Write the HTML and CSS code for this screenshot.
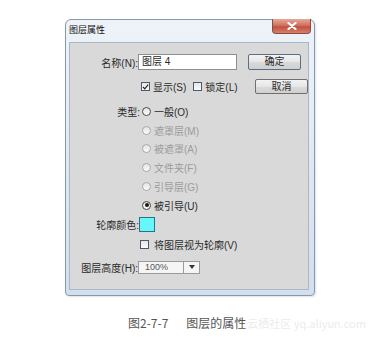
FILE: index.html
```html
<!DOCTYPE html>
<html lang="zh">
<head>
<meta charset="utf-8">
<title>图层属性</title>
<link rel="stylesheet" href="styles.css">
</head>
<body>
<div class="dialog">
  <div class="titlebar">
    <span class="title">图层属性</span>
    <span class="close"><svg width="10" height="8" viewBox="0 0 10 8"><path d="M1.5 1 L8.5 7 M8.5 1 L1.5 7" stroke="#fff" stroke-width="2.2" stroke-linecap="round"/></svg></span>
  </div>
  <div class="panel">
    <div class="row r-name">
      <span class="label">名称(N):</span>
      <span class="input">图层 4</span>
      <span class="btn default">确定</span>
    </div>
    <div class="row r-show">
      <span class="checks">
        <span class="check on"><svg width="8" height="8" viewBox="0 0 8 8"><path d="M1.2 4 L3.2 6.2 L7 1.3" fill="none" stroke="#222" stroke-width="1.3"/></svg></span>
        <span class="ctext">显示(S)</span>
        <span class="check lock"></span>
        <span class="ctext">锁定(L)</span>
      </span>
      <span class="btn">取消</span>
    </div>
    <div class="types">
      <div class="row r-radio"><span class="label tl">类型:</span><span class="radio"></span><span class="rtext">一般(O)</span></div>
      <div class="row r-radio off"><span class="label tl"></span><span class="radio"></span><span class="rtext">遮罩层(M)</span></div>
      <div class="row r-radio off"><span class="label tl"></span><span class="radio"></span><span class="rtext">被遮罩(A)</span></div>
      <div class="row r-radio off"><span class="label tl"></span><span class="radio"></span><span class="rtext">文件夹(F)</span></div>
      <div class="row r-radio off"><span class="label tl"></span><span class="radio"></span><span class="rtext">引导层(G)</span></div>
      <div class="row r-radio"><span class="label tl"></span><span class="radio sel"></span><span class="rtext">被引导(U)</span></div>
    </div>
    <div class="row r-color">
      <span class="label cl">轮廓颜色:</span>
      <span class="swatch"></span>
    </div>
    <div class="row r-outline">
      <span class="check"></span>
      <span class="ctext">将图层视为轮廓(V)</span>
    </div>
    <div class="row r-height">
      <span class="label">图层高度(H):</span>
      <span class="select"><span class="sval">100%</span><span class="sarrow"><svg width="6" height="4" viewBox="0 0 6 4"><path d="M0 0 H6 L3 4 Z" fill="#333"/></svg></span></span>
    </div>
  </div>
</div>
<p class="caption"><span>图2-7-7</span><span class="ctitle">图层的属性</span><span class="wm">云栖社区 yq.aliyun.com</span></p>
</body>
</html>
```
FILE: styles.css
```css
html, body {
  margin: 0;
  padding: 0;
  background: #ffffff;
}
body {
  font-family: "Liberation Sans", "Noto Sans CJK SC", sans-serif;
  color: #2a2a2a;
}
.dialog {
  margin: 19px 0 0 65px;
  width: 250px;
  height: 277px;
  box-sizing: border-box;
  border: 1px solid #8598b0;
  border-radius: 6px 6px 4px 4px;
  background: linear-gradient(#eef3f9, #d2dfec);
  padding: 0 5px 5px 3px;
  display: flex;
  flex-direction: column;
  box-shadow: 1px 1px 2px rgba(0,0,0,0.12);
}
.titlebar {
  height: 22px;
  flex: none;
  display: flex;
  justify-content: space-between;
  align-items: flex-start;
}
.title {
  font-family: "Noto Sans CJK SC", sans-serif;
  font-size: 9px;
  line-height: 20px;
  color: #111;
}
.close {
  width: 39px;
  height: 15px;
  margin: -1px -2px 0 0;
  box-sizing: border-box;
  border: 1px solid #8f4a40;
  border-top: none;
  border-radius: 0 0 4px 4px;
  background: linear-gradient(#e8a898, #cf6a58 50%, #c0503e 55%, #d4806c);
  display: flex;
  align-items: center;
  justify-content: center;
}
.panel {
  flex: 1;
  box-sizing: border-box;
  background: #d9d9d9;
  border: 1px solid #a9b7c8;
  padding-top: 11px;
  font-size: 10px;
}
.row {
  display: flex;
  align-items: center;
}
.label {
  flex: none;
  width: 68px;
  text-align: right;
  white-space: nowrap;
}
.r-name {
  height: 16px;
}
.input {
  width: 99px;
  height: 16px;
  box-sizing: border-box;
  border: 1px solid #8e8e8e;
  background: #fff;
  padding-left: 3px;
  line-height: 14px;
}
.btn {
  width: 53px;
  height: 15px;
  box-sizing: border-box;
  border: 1px solid #707070;
  border-radius: 2px;
  background: linear-gradient(#f3f3f3, #e6e6e6 50%, #dadada 52%, #d0d0d0);
  text-align: center;
  line-height: 13px;
  flex: none;
}
.r-name .btn {
  margin-left: 11px;
  height: 16px;
  line-height: 14px;
  border-color: #5a6e86;
}
.r-show {
  height: 15px;
  margin-top: 9px;
  padding-left: 71px;
}
.checks {
  flex: 1;
  display: flex;
  align-items: center;
}
.check {
  flex: none;
  width: 9px;
  height: 9px;
  box-sizing: border-box;
  border: 1px solid #50596a;
  background: linear-gradient(#e8e8e8, #fafafa);
  display: flex;
  align-items: center;
  justify-content: center;
}
.ctext {
  margin-left: 3px;
  white-space: nowrap;
}
.check.lock {
  margin-left: 7px;
}
.types {
  margin-top: 8px;
}
.r-radio {
  height: 18.75px;
}
.tl {
  width: 70px;
}
.radio {
  flex: none;
  width: 9px;
  height: 9px;
  box-sizing: border-box;
  border: 1px solid #4a4a4a;
  border-radius: 50%;
  background: linear-gradient(#e4e4e4, #fbfbfb);
  margin-left: 2px;
  position: relative;
}
.radio.sel::after {
  content: "";
  position: absolute;
  left: 1.5px;
  top: 1.5px;
  width: 4px;
  height: 4px;
  border-radius: 50%;
  background: #1a1a1a;
}
.rtext {
  margin-left: 3px;
  white-space: nowrap;
}
.off .radio {
  border-color: #a8a8a8;
}
.off .rtext {
  color: #9c9c9c;
}
.r-color {
  height: 15px;
  margin-top: 2.5px;
}
.cl {
  width: 69px;
}
.swatch {
  width: 16px;
  height: 15px;
  box-sizing: border-box;
  border: 1px solid #2f6f8f;
  background: #66f8f8;
}
.r-outline {
  height: 14px;
  margin-top: 5px;
  padding-left: 70px;
}
.r-outline .ctext {
  margin-left: 5px;
}
.r-height {
  height: 14px;
  margin-top: 9px;
}
.select {
  width: 62px;
  height: 13px;
  box-sizing: border-box;
  border: 1px solid #9a9a9a;
  background: #f5f5f5;
  display: flex;
  font-size: 9px;
  color: #555;
}
.sval {
  flex: 1;
  padding-left: 6px;
  line-height: 11px;
}
.sarrow {
  width: 15px;
  border-left: 1px solid #9a9a9a;
  display: flex;
  align-items: center;
  justify-content: center;
}
.caption {
  margin: 19px 0 0 128px;
  font-family: "Noto Sans CJK SC", sans-serif;
  font-size: 12px;
  line-height: 16px;
  color: #555;
  white-space: nowrap;
}
.ctitle {
  margin-left: 18px;
}
.wm {
  margin-left: 1px;
  font-size: 11px;
  color: #ececec;
}
```
